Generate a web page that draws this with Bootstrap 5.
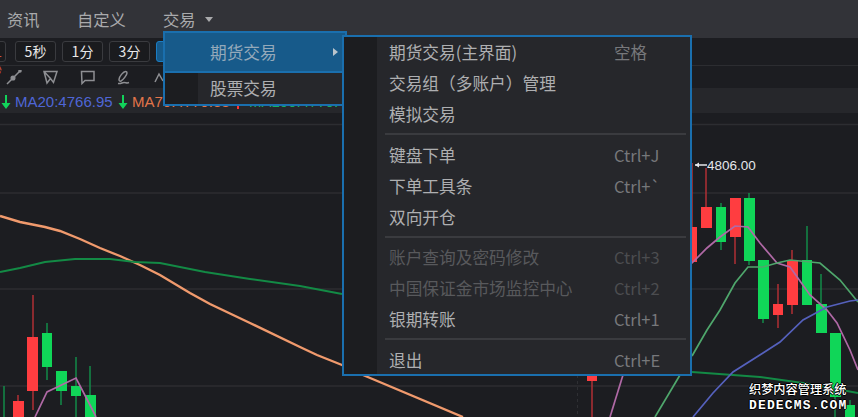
<!DOCTYPE html>
<html lang="zh">
<head>
  <title>交易</title>
  <meta charset="UTF-8">
  <link href="https://cdn.jsdelivr.net/npm/bootstrap@5.3.2/dist/css/bootstrap.min.css" rel="stylesheet">
  <style>
    body {
      background-color: #1c1d21;
      font-family: "Noto Sans CJK SC", "Liberation Sans", sans-serif;
      overflow: hidden;
    }

    .app-frame {
      width: 858px;
      height: 417px;
      overflow: hidden;
    }

    .menu-strip {
      height: 38px;
      background-color: #323338;
      color: #a9aaac;
      font-size: 16.300px;
      line-height: 38px;
    }
    .menu-strip span { position: absolute; top: 0; }
    .caret-down {
      position: absolute;
      left: 205px;
      top: 17px;
      border-left: 4.5px solid transparent;
      border-right: 4.5px solid transparent;
      border-top: 5px solid #a9aaac;
    }

    .period-bar {
      height: 28px;
      padding: 3px 0 3px 15px;
      gap: 6px;
      border-bottom: 1px solid #2c2d31;
    }
    .period-btn {
      width: 41px;
      height: 21px;
      font-size: 14px;
      line-height: 19px;
      text-align: center;
      color: #e8e8e8;
      background-color: #1a1b1e;
      border: 1px solid #3a3b3f;
      border-radius: 3px;
    }
    .period-btn.cut-off {
      width: 22px;
      margin-left: -31px;
      margin-right: 3px;
      padding-right: 3px;
      text-align: right;
      color: #d6543f;
    }
    .period-btn.active-btn {
      background-color: #175a8a;
      border-color: #1a7dc4;
    }

    .tool-bar {
      height: 22px;
    }
    .tool-bar svg {
      position: absolute;
      top: 4px;
      fill: none;
      stroke: #8e8f93;
      stroke-width: 1.5;
    }

    .ma-row {
      height: 25px;
      background-color: #26272b;
      font-family: "Liberation Sans", sans-serif;
      font-size: 15px;
      line-height: 28px;
      white-space: nowrap;
    }
    .ma-row span, .ma-row svg { position: absolute; }
    .ma-row svg { top: 7px; }

    .chart-area {
      height: 304px;
    }
    .chart-area svg { display: block; }

    .price-tag {
      position: absolute;
      left: 707px;
      top: 44px;
      color: #e4e6ea;
      font-family: "Liberation Sans", sans-serif;
      font-size: 13.5px;
      line-height: 18px;
    }

    .site-mark {
      position: absolute;
      left: 749px;
      top: 269px;
      width: 100px;
      color: #fff;
      line-height: 15px;
      text-shadow: 1px 0 0 #000, -1px 0 0 #000, 0 1px 0 #000, 0 -1px 0 #000;
    }
    .site-mark div:first-child { font-size: 12.2px; font-weight: 500; white-space: nowrap; }
    .site-mark div:last-child {
      margin-top: 1px;
      font-family: "Liberation Mono", monospace;
      font-size: 13px;
      font-weight: bold;
      letter-spacing: 1.150px;
    }

    .trade-menu.dropdown-menu {
      --bs-dropdown-padding-y: 0;
      --bs-dropdown-border-radius: 0;
      --bs-dropdown-min-width: 0;
      position: absolute;
      left: 163px;
      top: 31px;
      width: 184px;
      height: 75px;
      background-color: #26272b;
      border: 2px solid #1a6fae;
      font-size: 16.7px;
    }
    .trade-menu .dropdown-item {
      height: 31px;
      padding: 0 0 0 45px;
      line-height: 31px;
      color: #aeafb1;
      background-image: linear-gradient(to right, #1c1d20 33px, transparent 33px);
    }
    .trade-menu .dropdown-item.picked {
      height: 40px;
      line-height: 38px;
      color: #94a9ba;
      background: #175a8a;
      border-bottom: 2px solid #1a6fae;
    }
    .side-arrow {
      position: absolute;
      left: 168px;
      top: 15px;
      border-top: 4.5px solid transparent;
      border-bottom: 4.5px solid transparent;
      border-left: 5px solid #b9c4cc;
    }

    .futures-menu.dropdown-menu {
      --bs-dropdown-padding-y: 0;
      --bs-dropdown-border-radius: 0;
      position: absolute;
      left: 342px;
      top: 35px;
      width: 350px;
      height: 341px;
      padding: 0;
      background-color: #26272b;
      background-image: linear-gradient(to right, #1c1d20 33px, transparent 33px);
      border: 2px solid #1a6fae;
      font-size: 16.7px;
    }
    .futures-menu .dropdown-item {
      display: flex;
      justify-content: space-between;
      height: 31px;
      padding: 0 0 0 45px;
      line-height: 30px;
      color: #aeafb1;
    }
    .futures-menu .dropdown-item em {
      width: 76px;
      font-style: normal;
      font-size: 16.500px;
      color: #77787b;
    }
    .futures-menu .dropdown-item.disabled { color: #58595c; }
    .futures-menu .dropdown-item.disabled em { color: #4c4d50; }
    .futures-menu .dropdown-divider {
      margin: 3px 4px 5px 41px;
      border-top: 2px solid #3a3b3f;
      opacity: 1;
    }
    .futures-menu .dropdown-divider.tight-gap { margin-bottom: 4px; }
  </style>
</head>
<body>
<div class="app-frame position-relative">

  <div class="menu-strip position-relative">
    <span style="left:7px">资讯</span>
    <span style="left:77px">自定义</span>
    <span style="left:163px">交易</span>
    <i class="caret-down"></i>
  </div>

  <div class="period-bar d-flex">
    <div class="period-btn cut-off">1秒</div>
    <div class="period-btn">5秒</div>
    <div class="period-btn">1分</div>
    <div class="period-btn">3分</div>
    <div class="period-btn active-btn"></div>
  </div>

  <div class="tool-bar position-relative">
    <svg style="left:6px" width="16" height="16"><path d="M14.500 .5 8.500 6.500M5.500 9.500 1 14"/><circle cx="7" cy="8" r="1.800" fill="#8e8f93"/><circle cx="14" cy="1" r="1" fill="#8e8f93"/></svg>
    <svg style="left:43px" width="16" height="16"><path d="M1 1.500H14L10.500 12.500 7.500 8.500 4 13zM1 1.500 7.500 8.500"/></svg>
    <svg style="left:80px" width="16" height="16"><path d="M1.500 1.500H14V10.500H5L2 13.500z"/></svg>
    <svg style="left:116px" width="16" height="16"><path d="M9.500 1.500C7.500 1.500 3 6.500 3 9.500c0 1.500 1 2 2 1.500 2-1 6-6 6-8 0-1-.5-1.500-1.500-1.500zM2 13.500c3 .5 4-1 6-1s3 1 5 0"/></svg>
    <svg style="left:154px" width="12" height="16"><path d="M1 12 5 4l4 7"/></svg>
  </div>

  <div class="ma-row position-relative">
    <svg style="left:1px" width="10" height="15" fill="#12d35a"><path d="M4 0h2v8h3.500L5 14 .5 8H4z"/></svg>
    <span style="left:15px;color:#4f66d6">MA20:4766.95</span>
    <svg style="left:118px" width="10" height="15" fill="#12d35a"><path d="M4 0h2v8h3.500L5 14 .5 8H4z"/></svg>
    <span style="left:132px;color:#e2754a">MA70:4779.38</span>
    <svg style="left:233px" width="10" height="15" fill="#f33"><path d="M4 14h2V6h3.500L5 0 .5 6H4z"/></svg>
    <span style="left:249px;color:#14b060">MA100:4779.49</span>
  </div>

  <div class="chart-area position-relative">
    <svg width="858" height="304" viewBox="0 113 858 304">
      <g stroke="#2c2d31" stroke-width="1.500">
        <path d="M0 124.500H858M0 193H858M0 289H858M0 386H858"/>
      </g>
      <path d="M577.500 375V417" stroke="#2e2f33" stroke-dasharray="3 3"/>

      <g fill="none" stroke-width="2.400">
        <path stroke="#f09a6d" d="M0 216 20 222 45 227 60 231 80 239 100 248 120 256 140 265 160 275 190 293 210 304 250 323 300 347 317 355 342 365 363 375 463 417"/>
      </g>
      <g fill="none" stroke-width="2">
        <path stroke="#138a45" d="M0 272 20 268 45 262 75 259 110 259 135 262 160 263 205 272 250 279 300 286 342 294"/>
        <path stroke="#138a45" d="M692 372 760 377 803 383 858 393"/>
      </g>

      <g stroke="#b02f34" stroke-width="1.500">
        <path d="M18 395V417M33 295V410M592 381V417M692 163V264M706 168V208M735 237V264M778 284V328M792 250V314"/>
      </g>
      <g stroke="#128a48" stroke-width="1.500">
        <path d="M4 386V417M47 323V380M61 391V405M76 357V417M90 366V396M721 203V250M749 193V265M763 319V323M807 226V260M821 274V305M835 397V417M850 400V406"/>
      </g>
      <g fill="#ff3d40">
        <path d="M13 401h11v16H13zM27 337h11v54H27zM587 375h10v6h-10zM692 227h5v35h-5zM701 207h11v21h-11zM730 198h11v39h-11zM773 304h10v11h-10zM787 260h11v45h-11z"/>
      </g>
      <g fill="#10d658">
        <path d="M42 333h10v34H42zM56 371h11v20H56zM71 386h10v10H71zM85 395h11v22H85zM716 207h10v35h-10zM744 198h11v63h-11zM758 260h11v59h-11zM802 260h10v45h-10zM816 304h11v29h-11zM830 333h11v64h-11zM845 405h10v12h-10z"/>
      </g>

      <g fill="none" stroke-width="1.700">
        <path stroke="#b069a6" d="M35 417 47 392 76 378 90 405 96 417"/>
        <path stroke="#b069a6" d="M623 375 610 417"/>
        <path stroke="#b069a6" d="M692 263 707 248 720 237 735 226 748 227 760 243 777 263 790 267 810 295 827 310 837 323 850 350 858 370"/>
        <path stroke="#4fa76c" d="M680 375 655 417"/>
        <path stroke="#4fa76c" d="M692 356 707 330 720 310 735 283 748 267 763 267 777 263 790 260 820 263 840 280 858 302"/>
        <path stroke="#5561bd" d="M693 417 713 393 733 372 763 353 780 342 803 320 827 307 850 301 858 300"/>
      </g>
      <path d="M695 165h12" stroke="#e4e6ea" stroke-width="1.500"/>
      <path d="M695 165l4-2.500v5z" fill="#e4e6ea"/>
    </svg>
    <div class="price-tag">4806.00</div>
    <div class="site-mark">
      <div>织梦内容管理系统</div>
      <div>DEDECMS.COM</div>
    </div>
  </div>

  <div class="trade-menu dropdown-menu show">
    <a class="dropdown-item picked position-relative" href="#">期货交易<i class="side-arrow"></i></a>
    <a class="dropdown-item" href="#">股票交易</a>
  </div>

  <div class="futures-menu dropdown-menu show">
    <a class="dropdown-item" href="#"><span>期货交易(主界面)</span><em>空格</em></a>
    <a class="dropdown-item" href="#"><span>交易组（多账户）管理</span></a>
    <a class="dropdown-item" href="#"><span>模拟交易</span></a>
    <hr class="dropdown-divider">
    <a class="dropdown-item" href="#"><span>键盘下单</span><em>Ctrl+J</em></a>
    <a class="dropdown-item" href="#"><span>下单工具条</span><em>Ctrl+`</em></a>
    <a class="dropdown-item" href="#"><span>双向开仓</span></a>
    <hr class="dropdown-divider tight-gap">
    <a class="dropdown-item disabled" href="#"><span>账户查询及密码修改</span><em>Ctrl+3</em></a>
    <a class="dropdown-item disabled" href="#"><span>中国保证金市场监控中心</span><em>Ctrl+2</em></a>
    <a class="dropdown-item" href="#"><span>银期转账</span><em>Ctrl+1</em></a>
    <hr class="dropdown-divider">
    <a class="dropdown-item" href="#"><span>退出</span><em>Ctrl+E</em></a>
  </div>
</div>
<script src="https://cdn.jsdelivr.net/npm/bootstrap@5.3.2/dist/js/bootstrap.bundle.min.js"></script>
</body>
</html>
